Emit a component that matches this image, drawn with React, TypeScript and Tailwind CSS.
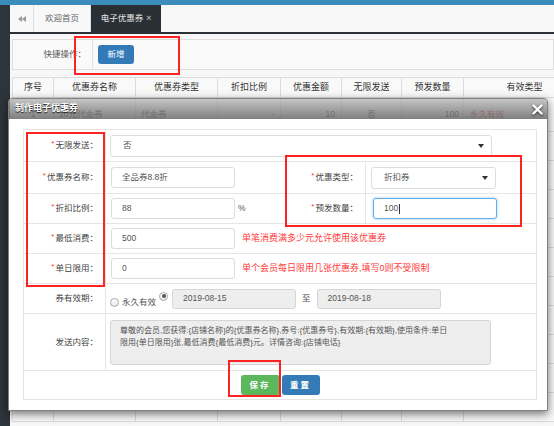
import clsx from 'clsx';

const cols = ['w-[41px]', 'w-[82px]', 'w-[82px]', 'w-[63px]', 'w-[61px]', 'w-[60px]', 'w-[62px]', 'w-[122px]'];
const heads = ['序号', '优惠券名称', '优惠券类型', '折扣比例', '优惠金额', '无限发送', '预发数量', '有效类型'];

function Caret() {
  return (
    <svg width="6" height="4" viewBox="0 0 6 4" className="shrink-0">
      <path d="M0 0h6L3 4z" fill="#333" />
    </svg>
  );
}

function Label({ text, req, className }: { text: string; req?: boolean; className?: string }) {
  return (
    <div className={clsx('flex shrink-0 items-center justify-end border-r border-[#e5e5e5] pr-[7px] text-[#444]', className ?? 'w-[82px]')}>
      {req && <span className="mr-[1px] -mt-[3px] text-[8px] text-[#f33]">*</span>}
      {text}：
    </div>
  );
}

function Field({ value, w, focus }: { value: string; w: string; focus?: boolean }) {
  return (
    <div
      className={clsx(
        'flex h-[21px] items-center rounded-[3px] border bg-white pl-[10px] text-[#555]',
        w,
        focus ? 'border-[#66afe9] shadow-[0_0_3px_rgba(102,175,233,0.7)]' : 'border-[#dcdcdc]'
      )}
    >
      {value}
      {focus && <span className="ml-[1px] h-[10px] w-px bg-[#333]" />}
    </div>
  );
}

function Select({ value, w, pad }: { value: string; w: string; pad: string }) {
  return (
    <div className={clsx('flex h-[22px] items-center justify-between rounded-[3px] border border-[#dcdcdc] bg-white pr-[7px] text-[#555]', w, pad)}>
      {value}
      <Caret />
    </div>
  );
}

function Hint({ text }: { text: string }) {
  return <span className="ml-[7px] text-[9px] text-[#ff3b3b]">{text}</span>;
}

function Red({ className }: { className: string }) {
  return <div className={clsx('pointer-events-none absolute border-2 border-[#f22]', className)} />;
}

export default function App() {
  return (
    <div className="relative h-[426px] w-[554px] overflow-hidden bg-[#f7f7f7] font-['Liberation_Sans','Noto_Sans_CJK_SC',sans-serif] text-[8.5px]">
      <div className="h-[5px] bg-[#3c8dbc]" />
      <div className="flex h-[421px]">
        <div className="w-[10px] shrink-0 bg-[#2d343a]" />
        <div className="flex min-w-0 flex-1 flex-col">
          {/* tabs */}
          <div className="flex h-[29px] shrink-0 border-b-2 border-[#2b3137] bg-[#f8f8f8]">
            <div className="flex w-[24px] items-center justify-center border-r border-[#ddd]">
              <svg width="8" height="6" viewBox="0 0 8 6">
                <path d="M4 0v6L0 3zM8 0v6L4 3z" fill="#999" />
              </svg>
            </div>
            <div className="flex w-[57px] items-center justify-center border-r border-[#ddd] text-[#666]">欢迎首页</div>
            <div className="flex w-[70px] items-center justify-center gap-[3px] bg-[#283036] text-[#e6e6e6]">
              电子优惠券<span className="font-bold text-[#aaa]">×</span>
            </div>
          </div>

          {/* quick actions */}
          <div className="ml-[2px] mt-[5px] flex h-[31px] shrink-0 border border-[#ddd] bg-[#fafafa]">
            <div className="flex w-[80px] items-center justify-end border-r border-[#e3e3e3] pr-[6px] text-[#555]">快捷操作：</div>
            <div className="flex items-center pl-[5px]">
              <div className="flex h-[19px] w-[36px] items-center justify-center rounded-[3px] bg-[#337ab7] text-white">新增</div>
            </div>
          </div>

          {/* list */}
          <div className="ml-[2px] mt-[7px] border-l border-t border-[#ddd] bg-[#f9f9f9] text-[#333]">
            <div className="flex h-[20px]">
              {heads.map((h, i) => (
                <div key={h} className={clsx('flex shrink-0 items-center justify-center border-b border-r border-[#ddd] text-[9px]', cols[i])}>
                  {h}
                </div>
              ))}
            </div>
            <div className="flex h-[34px]">
              <div className={clsx('flex shrink-0 items-center justify-center border-b border-r border-[#ddd]', cols[0])}>1</div>
              <div className={clsx('flex shrink-0 items-center border-b border-r border-[#ddd] pl-[5px]', cols[1])}>10元代金券</div>
              <div className={clsx('flex shrink-0 items-center border-b border-r border-[#ddd] pl-[5px]', cols[2])}>代金券</div>
              <div className={clsx('flex shrink-0 items-center justify-end border-b border-r border-[#ddd] pr-[6px]', cols[3])}>-</div>
              <div className={clsx('flex shrink-0 items-center justify-end border-b border-r border-[#ddd] pr-[6px]', cols[4])}>10</div>
              <div className={clsx('flex shrink-0 items-center justify-center border-b border-r border-[#ddd]', cols[5])}>否</div>
              <div className={clsx('flex shrink-0 items-center justify-end border-b border-r border-[#ddd] pr-[4px]', cols[6])}>100</div>
              <div className={clsx('flex shrink-0 items-center border-b border-r border-[#ddd] pl-[6px] text-[#c9302c]', cols[7])}>永久有效</div>
            </div>
            {Array.from({ length: 10 }).map((_, r) => (
              <div key={r} className="flex h-[29px]">
                {cols.map((c, i) => (
                  <div key={i} className={clsx('shrink-0 border-b border-r border-[#ddd]', c)} />
                ))}
              </div>
            ))}
          </div>
        </div>
      </div>

      {/* dialog */}
      <div className="absolute left-[8px] top-[98px] flex h-[313px] w-[540px] flex-col overflow-hidden rounded-t-[4px] border border-[#808080] shadow-[0_3px_10px_rgba(0,0,0,0.55)]">
        <div className="flex h-[20px] shrink-0 items-center justify-between bg-[linear-gradient(to_bottom,rgba(175,175,175,0.7),rgba(105,105,105,0.85))] pl-[6px] pr-[4px]">
          <span className="text-[9px] font-bold text-white [text-shadow:0_1px_1px_rgba(0,0,0,0.9)]">制作电子优惠券</span>
          <svg width="11" height="11" viewBox="0 0 11 11" className="drop-shadow-[0_1px_1px_rgba(0,0,0,0.7)]">
            <path d="M1.5 1.5l8 8M9.5 1.5l-8 8" stroke="#fff" strokeWidth="2.4" strokeLinecap="round" />
          </svg>
        </div>
        <div className="flex-1 bg-white pl-[14px] pr-[10px] pt-[10px]">
          <div className="border-l border-r border-t border-[#e5e5e5] text-[#555]">
            <div className="flex h-[32px] border-b border-[#e5e5e5]">
              <Label text="无限发送" req />
              <div className="flex items-center pl-[4px]">
                <Select value="否" w="w-[382px]" pad="pl-[12px]" />
              </div>
            </div>
            <div className="flex h-[32px] border-b border-[#e5e5e5]">
              <Label text="优惠券名称" req />
              <div className="flex flex-1 items-center pl-[5px]">
                <Field value="全品券8.8折" w="w-[124px]" />
              </div>
              <Label text="优惠类型" req className="w-[80px]" />
              <div className="flex w-[170px] items-center pl-[5px]">
                <Select value="折扣券" w="w-[125px]" pad="pl-[12px]" />
              </div>
            </div>
            <div className="flex h-[30px] border-b border-[#e5e5e5]">
              <Label text="折扣比例" req />
              <div className="flex flex-1 items-center pl-[5px]">
                <Field value="88" w="w-[124px]" />
                <span className="ml-[3px]">%</span>
              </div>
              <Label text="预发数量" req className="w-[80px]" />
              <div className="flex w-[170px] items-center pl-[7px]">
                <Field value="100" w="w-[124px]" focus />
              </div>
            </div>
            <div className="flex h-[30px] border-b border-[#e5e5e5]">
              <Label text="最低消费" req />
              <div className="flex items-center pl-[5px]">
                <Field value="500" w="w-[124px]" />
                <Hint text="单笔消费满多少元允许使用该优惠券" />
              </div>
            </div>
            <div className="flex h-[30px] border-b border-[#e5e5e5]">
              <Label text="单日限用" req />
              <div className="flex items-center pl-[5px]">
                <Field value="0" w="w-[124px]" />
                <Hint text="单个会员每日限用几张优惠券,填写0则不受限制" />
              </div>
            </div>
            <div className="flex h-[30px] border-b border-[#e5e5e5]">
              <Label text="券有效期" />
              <div className="flex items-center pl-[4px]">
                <span className="mt-[8px] h-[9px] w-[9px] rounded-full border border-[#a8a8a8] bg-[linear-gradient(#fff,#e6e6e6)]" />
                <span className="ml-[3px] mt-[8px]">永久有效</span>
                <span className="mb-[5px] ml-[3px] flex h-[9px] w-[9px] items-center justify-center rounded-full border border-[#a8a8a8] bg-[linear-gradient(#fff,#e6e6e6)]">
                  <span className="h-[4px] w-[4px] rounded-full bg-[#555]" />
                </span>
                <div className="ml-[4px] flex h-[20px] w-[124px] items-center rounded-[3px] border border-[#d5d5d5] bg-[#eee] pl-[10px]">2019-08-15</div>
                <span className="mx-[6px] text-[#444]">至</span>
                <div className="flex h-[20px] w-[124px] items-center rounded-[3px] border border-[#d5d5d5] bg-[#eee] pl-[10px]">2019-08-18</div>
              </div>
            </div>
            <div className="flex h-[57px] border-b border-[#e5e5e5]">
              <Label text="发送内容" />
              <div className="flex items-center pl-[4px]">
                <div className="h-[45px] w-[381px] whitespace-nowrap rounded-[3px] border border-[#d5d5d5] bg-[#eee] px-[9px] pt-[4px] text-[8px] leading-[12px] text-[#555]">
                  尊敬的会员,您获得:{'{'}店铺名称{'}'}的{'{'}优惠券名称{'}'},券号:{'{'}优惠券号{'}'},有效期:{'{'}有效期{'}'},使用条件:单日
                  <br />
                  限用{'{'}单日限用{'}'}张,最低消费{'{'}最低消费{'}'}元。详情咨询:{'{'}店铺电话{'}'}
                </div>
              </div>
            </div>
            <div className="flex h-[29px] items-center justify-center gap-[2px] border-b border-[#e5e5e5]">
              <div className="flex h-[20px] w-[39px] items-center justify-center rounded-[3px] bg-[#5cb85c] font-bold tracking-[2px] text-white">保存</div>
              <div className="flex h-[20px] w-[38px] items-center justify-center rounded-[3px] bg-[#337ab7] font-bold tracking-[2px] text-white">重置</div>
            </div>
          </div>
        </div>
      </div>

      <Red className="left-[74px] top-[36px] h-[39px] w-[106px]" />
      <Red className="left-[26px] top-[132px] h-[155px] w-[79px]" />
      <Red className="left-[285px] top-[155px] h-[72px] w-[237px]" />
      <Red className="left-[228px] top-[360px] h-[37px] w-[53px]" />
    </div>
  );
}
